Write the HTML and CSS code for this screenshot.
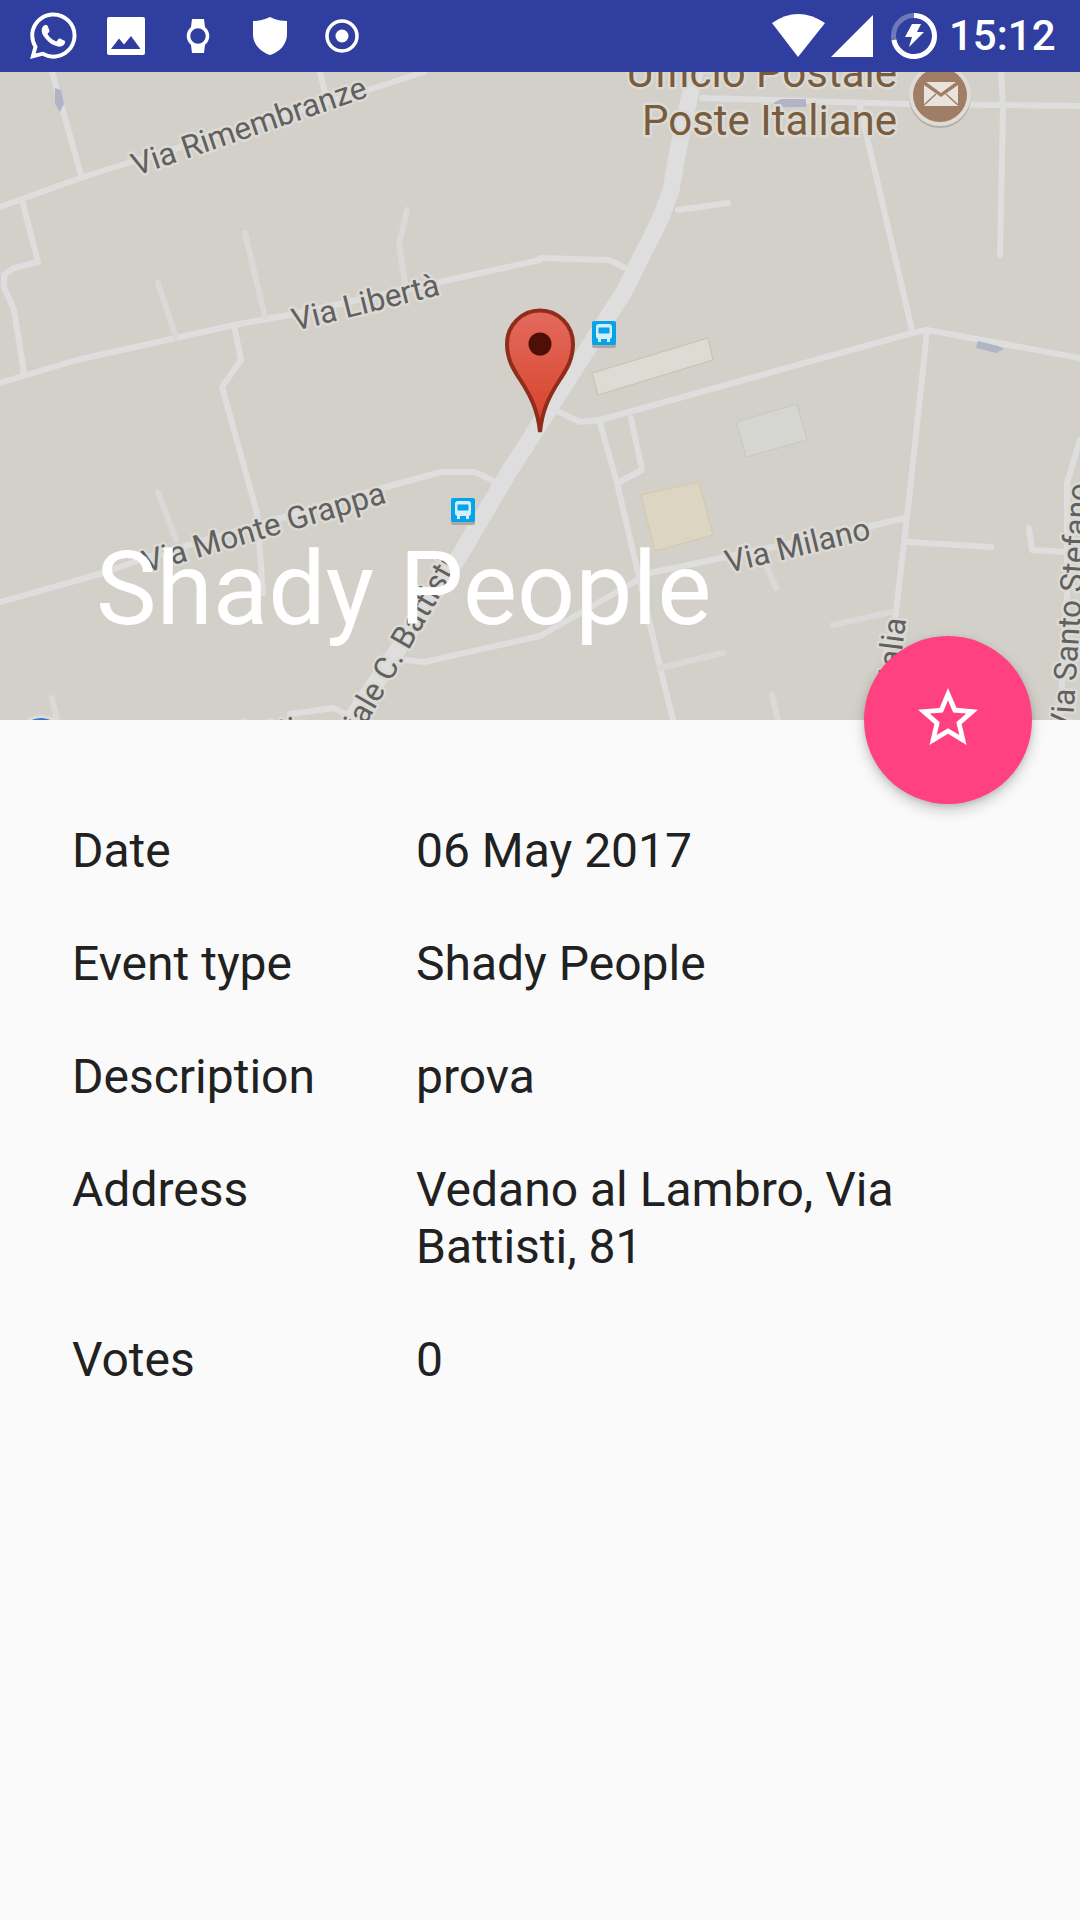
FILE: index.html
```html
<!DOCTYPE html>
<html lang="en">
<head>
<meta charset="utf-8">
<title>Shady People</title>
<link rel="stylesheet" href="styles.css">
</head>
<body>
<header class="status">
  <div class="status-left">
    <svg class="slot" viewBox="16 0 72 72"><g transform="translate(30 12.5) scale(1.94)"><path class="w" d="M17.472 14.382c-.297-.149-1.758-.867-2.03-.967-.273-.099-.471-.148-.67.15-.197.297-.767.966-.94 1.164-.173.199-.347.223-.644.075-.297-.15-1.255-.463-2.39-1.475-.883-.788-1.48-1.761-1.653-2.059-.173-.297-.018-.458.13-.606.134-.133.298-.347.446-.52.149-.174.198-.298.298-.497.099-.198.05-.371-.025-.52-.075-.149-.669-1.612-.916-2.207-.242-.579-.487-.5-.669-.51-.173-.008-.371-.01-.57-.01-.198 0-.52.074-.792.372-.272.297-1.04 1.016-1.04 2.479 0 1.462 1.065 2.875 1.213 3.074.149.198 2.096 3.2 5.077 4.487.709.306 1.262.489 1.694.625.712.227 1.36.195 1.871.118.571-.085 1.758-.719 2.006-1.413.248-.694.248-1.289.173-1.413-.074-.124-.272-.198-.57-.347m-5.421 7.403h-.004a9.87 9.87 0 01-5.031-1.378l-.361-.214-3.741.982.998-3.648-.235-.374a9.86 9.86 0 01-1.51-5.26c.001-5.45 4.436-9.884 9.888-9.884 2.64 0 5.122 1.03 6.988 2.898a9.825 9.825 0 012.893 6.994c-.003 5.45-4.437 9.884-9.885 9.884m8.413-18.297A11.815 11.815 0 0012.05 0C5.495 0 .16 5.335.157 11.892c0 2.096.547 4.142 1.588 5.945L.057 24l6.305-1.654a11.882 11.882 0 005.683 1.448h.005c6.554 0 11.89-5.335 11.893-11.893a11.821 11.821 0 00-3.48-8.413z"/></g></svg>
    <svg class="slot" viewBox="88 0 72 72"><path class="w" fill-rule="evenodd" d="M109 17h34a2 2 0 0 1 2 2v34a2 2 0 0 1-2 2h-34a2 2 0 0 1-2-2v-34a2 2 0 0 1 2-2zM111 49h29.500l-9.500-13-7 8.500-5-6z"/></svg>
    <svg class="slot" viewBox="160 0 72 72"><path class="w" d="M192 19h12l1 8h-14zM191 45h14l-1 8h-12z"/><circle class="ring" cx="198" cy="36" r="9.500" stroke-width="3.500"/></svg>
    <svg class="slot" viewBox="232 0 72 72"><path class="w" d="M270 17C276 20 282 21 287 21V34C287 44 280 52 270 55C260 52 253 44 253 34V21C258 21 264 20 270 17Z"/></svg>
    <svg class="slot" viewBox="304 0 72 72"><circle class="ring" cx="342" cy="36" r="15" stroke-width="3.500"/><circle class="w" cx="342" cy="36" r="6.500"/></svg>
  </div>
  <div class="status-right">
    <svg class="wifi" viewBox="768 0 60 72"><path class="w" d="M772 23Q798 5 825 23L798 57Z"/></svg>
    <svg class="signal" viewBox="828 0 50 72"><path class="w" d="M831 57L873 15V57Z"/></svg>
    <svg class="battery" viewBox="878 0 68 72"><circle class="ring faded" cx="913" cy="36" r="20.500" stroke-width="5"/><path class="ring" stroke-width="5" d="M913 15.500A20.500 20.500 0 1 1 892.900 40"/><path class="w" d="M911 24H920L916 32H923L908 47L911 37H904Z"/></svg>
    <span class="time">15:12</span>
  </div>
</header>

<section class="map">
  <svg class="map-art" viewBox="0 72 1080 648">
    <defs>
      <linearGradient id="pinfill" x1="0" y1="0" x2="0" y2="1">
        <stop offset="0" stop-color="#e36b5d"/>
        <stop offset="1" stop-color="#d83f28"/>
      </linearGradient>
      <g id="bus">
        <rect class="bus-shadow" x="0" y="2" width="24" height="25" rx="2"/>
        <rect class="bus-bg" width="24" height="24" rx="2"/>
        <rect class="bus-body" x="4" y="3" width="16" height="15" rx="3"/>
        <rect class="bus-bg" x="6.500" y="6.500" width="11" height="6"/>
        <rect class="bus-body" x="6" y="17" width="3" height="4"/>
        <rect class="bus-body" x="15" y="17" width="3" height="4"/>
      </g>
    </defs>

    <polygon class="bld bld-a" points="592,373 708,338 713,360 598,395"/>
    <polygon class="bld bld-b" points="736,422 797,404 807,440 746,457"/>
    <polygon class="bld bld-c" points="641,495 699,482 713,535 655,551"/>

    <polyline class="road" points="0,207 83,177 131,162 368,90 424,72"/>
    <polyline class="road" points="52,72 81,175"/>
    <polyline class="road" points="320,72 325,93"/>
    <polyline class="road" points="22,200 38,262 14,268 4,275 4,287 14,310 22,360 24,375"/>
    <polyline class="road" points="0,383 77,360 176,338 234,325 289,315 540,260"/>
    <polyline class="road" points="540,258 609,260 630,270"/>
    <polyline class="road stub" points="158,283 176,338"/>
    <polyline class="road stub" points="245,233 265,317"/>
    <polyline class="road stub" points="407,210 399,245 405,283"/>
    <polyline class="road" points="234,325 241,360 234,370 222,387 257,513 263,593"/>
    <polyline class="road" points="0,602 103,573 148,557 386,487 441,472 475,472 492,480"/>
    <polyline class="road stub" points="158,492 176,540"/>
    <polyline class="road-main" points="695,72 678,150 671,190 662,215 651,238 643,253 625,290 523,450 510,470 460,555 393,657 351,720"/>
    <polyline class="road" points="678,210 728,203"/>
    <polyline class="road" points="702,98 908,104 1080,106"/>
    <polyline class="road" points="860,107 912,330"/>
    <polyline class="road" points="1001,72 1003,107 1000,255"/>
    <polyline class="road" points="555,410 580,422 600,420 912,333 927,330 1080,358"/>
    <polyline class="road" points="927,330 924,360 907,517 895,620 884,660"/>
    <polyline class="road" points="600,423 617,483 660,667 673,720"/>
    <polyline class="road" points="631,418 642,470 617,483"/>
    <polyline class="road" points="905,518 867,527 726,557 650,573 540,636 424,662 406,660"/>
    <polyline class="road stub" points="767,567 776,588"/>
    <polyline class="road" points="908,542 991,547"/>
    <polyline class="road stub" points="833,625 891,612"/>
    <polyline class="road stub" points="660,668 723,653"/>
    <polyline class="road stub" points="772,695 778,720"/>
    <polyline class="road" points="1080,440 1067,483 1067,593 1060,720"/>
    <polyline class="road" points="1029,528 1032,550 1067,552"/>
    <polyline class="road stub" points="52,698 57,720"/>
    <polyline class="road" points="290,714 334,708 351,717"/>

    <path class="arrow" d="M55 88L61 90L64 104L60 112L55 104Z"/>
    <path class="arrow" d="M781 99H806V107H781L773 103Z"/>
    <path class="arrow" d="M978 341L998 346L1004 349L996 353L976 348Z"/>

    <circle class="poi-halo" cx="41" cy="739" r="24"/>
    <circle class="poi-blue" cx="41" cy="739" r="21"/>

    <text class="lbl" transform="translate(136 176) rotate(-18.800)">Via Rimembranze</text>
    <text class="lbl" transform="translate(295 331) rotate(-14)">Via Libertà</text>
    <text class="lbl" transform="translate(146 573) rotate(-16.300)">Via Monte Grappa</text>
    <text class="lbl" transform="translate(728 573) rotate(-13.500)">Via Milano</text>
    <text class="lbl lbl-end" transform="translate(458 565) rotate(-60)">Viale C. Battisti</text>
    <text class="lbl lbl-end" transform="translate(906 619) rotate(-83)">Via Italia</text>
    <text class="lbl" transform="translate(1072 734) rotate(-86)">Via Santo Stefano</text>
    <text class="lbl lbl-end" transform="translate(296 739) rotate(-5)">Via Liotti</text>

    <text class="lbl-poi" x="897" y="87">Ufficio Postale</text>
    <text class="lbl-poi" x="897" y="135">Poste Italiane</text>

    <circle class="env-shadow" cx="940" cy="97" r="31"/>
    <circle class="poi-halo" cx="940" cy="95" r="31"/>
    <circle class="env-bg" cx="940" cy="95" r="27"/>
    <path class="env" d="M924 85L941 97L958 85V106H924Z"/>
    <path class="env" d="M926 82H956L941 93Z"/>
    <path class="env-line" d="M924 105L936 94M958 105L946 94"/>

    <use href="#bus" x="592" y="321"/>
    <use href="#bus" x="451" y="498"/>

    <path class="pin" d="M540 432C538 412 532 398 521 381C513 369 507 359 507 344C507 325 522 310.500 540 310.500C558 310.500 573 325 573 344C573 359 567 369 559 381C548 398 542 412 540 432Z"/>
    <circle class="pin-dot" cx="540" cy="344" r="11.500"/>
  </svg>
  <h1 class="title">Shady People</h1>
  <button class="fab" type="button" aria-label="Favourite">
    <svg class="fab-star" viewBox="0 0 24 24"><path class="w" d="M22 9.240l-7.190-.620L12 2 9.190 8.630 2 9.240l5.460 4.730L5.820 21 12 17.270 18.180 21l-1.630-7.030L22 9.240zM12 15.400l-3.760 2.270 1-4.280-3.320-2.880 4.380-.380L12 6.100l1.710 4.040 4.380.380-3.320 2.880 1 4.280L12 15.400z"/></svg>
  </button>
</section>

<main class="details">
  <div class="key">Date</div><div class="val">06 May 2017</div>
  <div class="key">Event type</div><div class="val">Shady People</div>
  <div class="key">Description</div><div class="val">prova</div>
  <div class="key">Address</div><div class="val">Vedano al Lambro, Via Battisti, 81</div>
  <div class="key">Votes</div><div class="val">0</div>
</main>
</body>
</html>
```
FILE: styles.css
```css
* { box-sizing: border-box; }
html, body { margin: 0; padding: 0; }
body {
  width: 1080px;
  height: 1920px;
  background: #fafafa;
  font-family: Roboto, "Liberation Sans", sans-serif;
  overflow: hidden;
  display: flex;
  flex-direction: column;
}

.status {
  height: 72px;
  flex: none;
  background: #303f9f;
  display: flex;
  justify-content: space-between;
  position: relative;
  z-index: 2;
}
.status-left { display: flex; padding-left: 16px; }
.status-right { display: flex; align-items: center; padding-right: 22px; }
.slot { width: 72px; height: 72px; display: block; }
.wifi { width: 60px; height: 72px; display: block; }
.signal { width: 50px; height: 72px; display: block; }
.battery { width: 68px; height: 72px; display: block; margin: 0 2px 0 1px; }
.time { color: #fff; font-size: 42px; font-weight: 500; line-height: 72px; width: 109px; }
.w { fill: #fff; }
.ring { fill: none; stroke: #fff; }
.faded { stroke-opacity: .3; }

.map {
  height: 648px;
  flex: none;
  position: relative;
  background: #d3d0c9;
}
.map-art { display: block; width: 1080px; height: 648px; }

.road, .road-main { fill: none; stroke-linejoin: round; stroke-linecap: round; }
.road { stroke: #dedede; stroke-width: 6; }
.road.stub { stroke: #d9d9d7; }
.road-main { stroke: #dedede; stroke-width: 17; }
.arrow { fill: #b1b4c6; }

.bld { stroke-width: 1; }
.bld-a { fill: #dcdbd4; stroke: #c3c0b4; }
.bld-b { fill: #d5d5d2; stroke: #c6c7c2; }
.bld-c { fill: #dbd5c2; stroke: #d3c8a8; }

.lbl {
  font-family: Roboto, sans-serif;
  font-size: 31.5px;
  fill: #606060;
  stroke: #dcdad5;
  stroke-width: 5px;
  stroke-linejoin: round;
  paint-order: stroke;
}
.lbl-end, .lbl-poi { text-anchor: end; }
.lbl-poi {
  font-family: Roboto, sans-serif;
  font-size: 42px;
  fill: #795b3e;
  stroke: #dcdad5;
  stroke-width: 5px;
  stroke-linejoin: round;
  paint-order: stroke;
}

.poi-halo { fill: #dfdcd6; }
.poi-blue { fill: #3a72d8; }
.env-shadow { fill: #b3afa8; }
.env-bg { fill: #a07d65; }
.env { fill: #e8e3dd; }
.env-line { fill: none; stroke: #a07d65; stroke-width: 1.500; }

.bus-shadow { fill: #a9a8a4; }
.bus-bg { fill: #05a3e8; }
.bus-body { fill: #d6eefa; }

.pin { fill: url(#pinfill); stroke: #8f2c1c; stroke-width: 4; }
.pin-dot { fill: #4e0f07; }

.title {
  position: absolute;
  left: 96px;
  top: 457px;
  margin: 0;
  color: #fff;
  font-size: 102px;
  font-weight: 400;
  line-height: 120px;
  white-space: nowrap;
}

.fab {
  position: absolute;
  right: 48px;
  top: 564px;
  width: 168px;
  height: 168px;
  padding: 0 0 4px;
  border: 0;
  border-radius: 50%;
  background: #ff4081;
  box-shadow: 0 6px 14px rgba(0, 0, 0, .2), 0 2px 5px rgba(0, 0, 0, .1);
  display: flex;
  align-items: center;
  justify-content: center;
}
.fab-star { width: 72px; height: 72px; display: block; }

.details {
  display: grid;
  grid-template-columns: 344px 1fr;
  row-gap: 56px;
  padding: 102px 100px 0 72px;
  color: #212121;
  font-size: 48px;
  line-height: 57px;
}
```
